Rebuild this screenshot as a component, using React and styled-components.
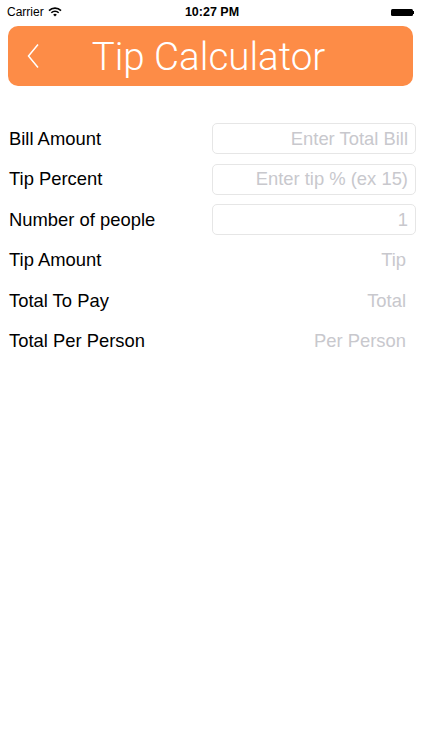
import React from 'react';
import styled, { createGlobalStyle } from 'styled-components';

const GlobalStyle = createGlobalStyle`
  html, body {
    margin: 0;
    padding: 0;
    background: #fff;
  }
  body {
    font-family: "Liberation Sans", Arial, sans-serif;
    color: #000;
  }
`;

const rows = [
  { label: 'Bill Amount', hint: 'Enter Total Bill', input: true },
  { label: 'Tip Percent', hint: 'Enter tip % (ex 15)', input: true },
  { label: 'Number of people', hint: '1', input: true },
  { label: 'Tip Amount', hint: 'Tip' },
  { label: 'Total To Pay', hint: 'Total' },
  { label: 'Total Per Person', hint: 'Per Person' }
];

const App = () => {
  return (
    <Screen>
      <GlobalStyle />
      <StatusBar>
        <Carrier>
          Carrier
          <svg width="14" height="10" viewBox="0 0 14 10">
            <path d="M1 3.6 A8.5 8.5 0 0 1 13 3.6" stroke="#000" strokeWidth="1.6" fill="none" />
            <path d="M3.3 5.7 A5.3 5.3 0 0 1 10.7 5.7" stroke="#000" strokeWidth="1.6" fill="none" />
            <path d="M7 9.6 L5.2 7.7 A2.6 2.6 0 0 1 8.8 7.7 Z" fill="#000" />
          </svg>
        </Carrier>
        <Clock>10:27 PM</Clock>
        <Battery>
          <BatteryBody />
          <BatteryTip />
        </Battery>
      </StatusBar>

      <Header>
        <BackButton>
          <svg width="14" height="26" viewBox="0 0 14 26">
            <path d="M11 1.5 L1.5 13 L11 24.5" stroke="#fff" strokeWidth="1.5" fill="none" />
          </svg>
        </BackButton>
        <Title>Tip Calculator</Title>
      </Header>

      <Form>
        {rows.map((r) => (
          <Row key={r.label}>
            <Label>{r.label}</Label>
            {r.input ? <Field placeholder={r.hint} /> : <Output>{r.hint}</Output>}
          </Row>
        ))}
      </Form>
    </Screen>
  );
};

const Screen = styled.div`
  width: 422px;
  height: 750px;
  background: #fff;
  overflow: hidden;
`;

const StatusBar = styled.div`
  height: 24px;
  display: grid;
  grid-template-columns: 1fr auto 1fr;
  align-items: center;
  padding: 0 8px 0 7px;
  font-size: 12px;
`;

const Carrier = styled.div`
  display: flex;
  align-items: center;
  gap: 4px;
  svg {
    margin-top: -1px;
  }
`;

const Clock = styled.div`
  font-weight: 700;
  font-size: 12.5px;
  margin-left: 3px;
`;

const Battery = styled.div`
  justify-self: end;
  display: flex;
  align-items: center;
`;

const BatteryBody = styled.div`
  width: 22px;
  height: 7px;
  background: #000;
  border-radius: 1.5px;
`;

const BatteryTip = styled.div`
  width: 1.5px;
  height: 3px;
  background: #000;
`;

const Header = styled.div`
  margin: 2px 9px 0 8px;
  height: 60px;
  background: #fd8c47;
  border-radius: 10px;
  display: flex;
  align-items: center;
  position: relative;
`;

const BackButton = styled.div`
  position: absolute;
  left: 19px;
  top: 17px;
  display: flex;
`;

const Title = styled.div`
  flex: 1;
  text-align: center;
  color: #fff;
  font-family: Roboto, "Liberation Sans", sans-serif;
  font-weight: 300;
  font-size: 38.5px;
  margin-top: 1px;
  padding-right: 4px;
`;

const Form = styled.div`
  margin-top: 37px;
  padding: 0 6px 0 9px;
  display: flex;
  flex-direction: column;
  gap: 9.6px;
`;

const Row = styled.div`
  display: flex;
  align-items: center;
  justify-content: space-between;
  height: 31px;
`;

const Label = styled.div`
  font-size: 18.4px;
`;

const Field = styled.input`
  box-sizing: border-box;
  width: 204px;
  height: 31px;
  border: 1px solid #e6e6e6;
  border-radius: 5px;
  padding: 0 7px;
  text-align: right;
  font-family: "Liberation Sans", Arial, sans-serif;
  font-size: 18.4px;
  outline: none;
  &::placeholder {
    color: #c8c8cd;
  }
`;

const Output = styled.div`
  font-size: 18.4px;
  color: #c8c8cd;
  padding-right: 10px;
`;

export default App;
